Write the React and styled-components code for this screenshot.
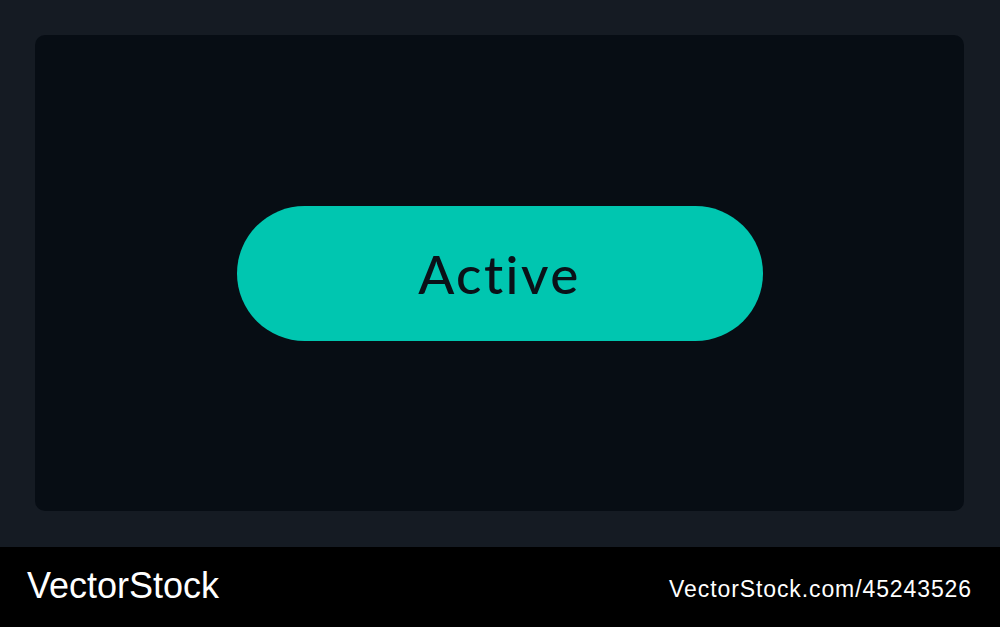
import React from 'react';
import styled, { createGlobalStyle } from 'styled-components';

const GlobalStyle = createGlobalStyle`
  html, body { margin: 0; padding: 0; }
  body { background: #151b23; font-family: "Liberation Sans", Arial, sans-serif; }
`;

export default () => {
    return (
        <Page>
            <GlobalStyle />
            <Stage>
                <Panel>
                    <PillButton type='button'>{'Active'}</PillButton>
                </Panel>
            </Stage>
            <Footer>
                <Brand>{'VectorStock'}</Brand>
                <StockId>{'VectorStock.com/45243526'}</StockId>
            </Footer>
        </Page>
    );
};

const Page = styled.div`
  width: 1000px;
  height: 627px;
  display: flex;
  flex-direction: column;
  overflow: hidden;
`;

const Stage = styled.main`
  flex: 1;
  padding: 35px 36px 36px 35px;
  background: #151b23;
  display: flex;
`;

const Panel = styled.section`
  flex: 1;
  background: #070d14;
  border-radius: 10px;
  display: flex;
  align-items: center;
  justify-content: center;
`;

const PillButton = styled.button`
  width: 526px;
  height: 135px;
  border: none;
  border-radius: 68px;
  background: #00c6b0;
  color: #0a1118;
  font-family: Lato, "Open Sans", sans-serif;
  font-size: 53px;
  font-weight: 500;
  letter-spacing: 2.5px;
  padding: 0;
  cursor: pointer;
`;

const Footer = styled.footer`
  height: 80px;
  background: #000;
  display: flex;
  align-items: center;
  justify-content: space-between;
  padding: 0 28px 0 27px;
  color: #fff;
`;

const Brand = styled.div`
  font-size: 36px;
  letter-spacing: 0;
  margin-top: -2px;
`;

const StockId = styled.div`
  font-size: 23px;
  letter-spacing: 0.9px;
  margin-top: 4px;
`;
